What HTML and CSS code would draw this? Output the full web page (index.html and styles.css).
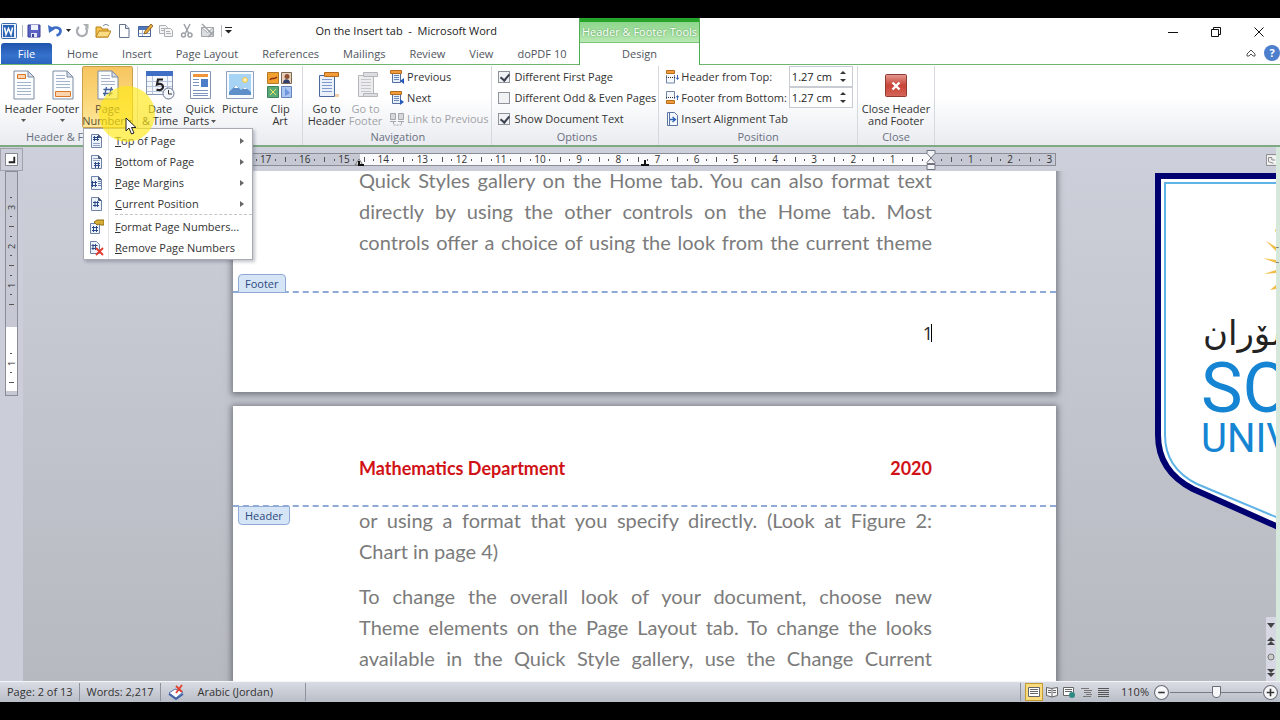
FILE: index.html
```
<!DOCTYPE html>
<html lang="en">
<head>
  <meta charset="UTF-8" />
  <meta name="viewport" content="width=device-width, initial-scale=1.0"/>
  <title>On the Insert tab - Microsoft Word</title>
  <link rel="stylesheet" href="styles.css">
</head>
<body>
  <!-- shared icon parts -->
  <svg class="defs" aria-hidden="true">
    <symbol id="sheet" viewBox="0 0 24 30">
      <path d="M2 1h14l6 6v22H2z" fill="#fbfcfe" stroke="#7d8ba3"/>
      <path d="M16 1v6h6z" fill="#d4dbe6" stroke="#7d8ba3"/>
    </symbol>
    <symbol id="num-page" viewBox="0 0 16 16">
      <path d="M3.500 1.500h7l3 3v10h-10z" fill="#eef3fb" stroke="#6f83a8"/>
      <path d="M10.500 1.500v3h3" fill="#46597c" stroke="#46597c"/>
    </symbol>
    <symbol id="caret" viewBox="0 0 7 4"><path d="M1 0h5L3.500 3z" fill="#555"/></symbol>
    <symbol id="nav-page" viewBox="0 0 16 16">
      <path d="M3.500 3.500h8v10h-8z" fill="#e6eefa" stroke="#566f9e"/>
      <path d="M5 6.500h5M5 8.500h5M5 10.500h5" stroke="#6b87b8"/>
      <path d="M1.500 1.500h11v3h-11z" fill="#f09b3c" stroke="#b56a1c"/>
    </symbol>
  </svg>

  <div class="window">
    <header class="top">
      <div class="top-left">
        <div class="titlebar">
          <div class="qat">
            <svg class="ico" viewBox="0 0 16 16"><rect x=".5" y=".5" width="15" height="15" rx="1" fill="#e8f0fb" stroke="#3a68ad"/><rect x="2" y="2" width="11" height="12" fill="#2b62b4"/><path d="M3.500 4.500l1.500 7 2.500-6 2.500 6 1.500-7" fill="none" stroke="#fff" stroke-width="1.500"/></svg>
            <span class="vsep"></span>
            <button type="button" aria-label="Save"><svg class="ico" viewBox="0 0 16 16"><path d="M2 2h12v12H2z" fill="#5a63c4" stroke="#3a3f94"/><path d="M5 2h7v5H5z" fill="#eef1fb"/><path d="M5 10h6v4H5z" fill="#dfe3f5"/><path d="M6 11h2v3H6z" fill="#3a3f94"/></svg></button>
            <button type="button" aria-label="Undo"><svg class="ico" viewBox="0 0 16 16"><path d="M5 5.500c5-2.500 9 0 8.500 3-.3 2-2 3.500-4 4" fill="none" stroke="#3d6cc5" stroke-width="2.600"/><path d="M1 2l1 8 6-4z" fill="#3d6cc5"/></svg></button>
            <button type="button" class="more" aria-label="Undo list"><svg class="caret" viewBox="0 0 7 4"><path d="M1 0h5L3.500 3z" fill="#222"/></svg></button>
            <button type="button" aria-label="Repeat"><svg class="ico" viewBox="0 0 16 16"><path d="M5 4a5 5 0 1 0 6.500.5" fill="none" stroke="#aaadb2" stroke-width="2.200"/><path d="M9 1h5.500v5.500z" fill="#aaadb2"/></svg></button>
            <button type="button" aria-label="Open"><svg class="ico" viewBox="0 0 16 16"><path d="M1 4h5l1 2h6v8H1z" fill="#f3c14d" stroke="#b98418"/><path d="M4 8h12l-3 6H1z" fill="#fbdc84" stroke="#b98418"/><path d="M8 3c2-2 4-2 6 0" fill="none" stroke="#6b7688"/></svg></button>
            <button type="button" aria-label="New"><svg class="ico" viewBox="0 0 16 16"><path d="M3.500 1.500h6l3.500 4v9H3.500z" fill="#fff" stroke="#64748f"/><path d="M9.500 1.500v4H13" fill="#dbe2ee" stroke="#64748f"/></svg></button>
            <button type="button" aria-label="Edit"><svg class="ico" viewBox="0 0 16 16"><path d="M1.500 3.500h12v10h-12z" fill="#fff" stroke="#466496"/><path d="M2 4h11v3H2z" fill="#4f77bd"/><path d="M2 10.500h11M5.500 7v6" stroke="#9fb2d3"/><path d="M7 11l1-3 6-7 2 2-6 7z" fill="#e6a83e" stroke="#7c5a1e" stroke-width=".8"/></svg></button>
            <button type="button" aria-label="Copy"><svg class="ico" viewBox="0 0 16 16" fill="#f4f4f5" stroke="#adb0b5"><path d="M1.500 2.500h6l2 2v6h-8z"/><path d="M6.500 5.500h6l2 2v6h-8zM3 5.500h3M3 7.500h3M8 8.500h4M8 10.500h5"/></svg></button>
            <button type="button" aria-label="Cut"><svg class="ico" viewBox="0 0 16 16" fill="none" stroke="#9da0a6" stroke-width="1.500"><path d="M5 1l4.500 9M11 1L6.500 10"/><circle cx="4.500" cy="12" r="2"/><circle cx="11" cy="12" r="2"/></svg></button>
            <button type="button" aria-label="Delete"><svg class="ico" viewBox="0 0 16 16" fill="#dcdde0" stroke="#a2a5aa"><path d="M1.500 4.500h12v9h-12zM1.500 4.500l6 5 6-5"/><path d="M2 1l11 11M14 8L8 14" stroke-width="1.500"/></svg></button>
            <span class="vsep"></span>
            <button type="button" class="customize" aria-label="Customize Quick Access Toolbar"><svg class="customize-ico" viewBox="0 0 7 7"><path d="M0 .5h7" stroke="#222"/><path d="M0 3h7L3.500 6.500z" fill="#222"/></svg></button>
          </div>
          <h1 class="title">On the Insert tab&nbsp; -&nbsp; Microsoft Word</h1>
        </div>
        <nav class="tabs">
          <button type="button" class="tab file">File</button>
          <button type="button" class="tab">Home</button>
          <button type="button" class="tab">Insert</button>
          <button type="button" class="tab">Page Layout</button>
          <button type="button" class="tab">References</button>
          <button type="button" class="tab">Mailings</button>
          <button type="button" class="tab">Review</button>
          <button type="button" class="tab">View</button>
          <button type="button" class="tab">doPDF 10</button>
        </nav>
      </div>
      <div class="context">
        <div class="context-name">Header &amp; Footer Tools</div>
        <button type="button" class="tab design">Design</button>
      </div>
      <div class="top-right">
        <div class="window-buttons">
          <button type="button" aria-label="Minimize"><svg viewBox="0 0 10 10"><path d="M0 5.500h10" stroke="#111"/></svg></button>
          <button type="button" aria-label="Restore"><svg viewBox="0 0 10 10" fill="none" stroke="#111"><path d="M.5 2.500h7v7h-7zM2.500 2.500v-2h7v7h-2"/></svg></button>
          <button type="button" aria-label="Close"><svg viewBox="0 0 10 10"><path d="M.5.5l9 9M9.500.5l-9 9" stroke="#111"/></svg></button>
        </div>
        <div class="help-row">
          <button type="button" aria-label="Minimize the Ribbon"><svg class="small-ico" viewBox="0 0 10 8"><path d="M1 5l4-4 4 4v2H7L5 5 3 7H1z" fill="#fff" stroke="#555"/></svg></button>
          <button type="button" class="help" aria-label="Help">?</button>
        </div>
      </div>
    </header>

    <section class="ribbon">
      <div class="group">
        <div class="group-body">
          <button type="button" class="big">
            <svg class="big-ico" viewBox="0 0 24 30"><use href="#sheet"/><path d="M5.500 4.500h8v4h-8z" fill="#fbd3ad" stroke="#d9772b"/><path d="M5 12.500h14M5 15.500h14M5 18.500h14M5 21.500h14M5 24.500h14" stroke="#a3b3cc"/></svg>
            <span>Header</span><svg class="caret"><use href="#caret"/></svg>
          </button>
          <button type="button" class="big">
            <svg class="big-ico" viewBox="0 0 24 30"><use href="#sheet"/><path d="M5 5.500h9M5 8.500h9M5 11.500h14M5 14.500h14M5 17.500h14" stroke="#a3b3cc"/><path d="M4.500 21.500h15v5h-15z" fill="#fbd3ad" stroke="#d9772b"/></svg>
            <span>Footer</span><svg class="caret"><use href="#caret"/></svg>
          </button>
          <div class="dropdown">
            <button type="button" class="big active">
              <svg class="big-ico" viewBox="0 0 24 30"><use href="#sheet"/><path d="M5 5.500h9M5 8.500h9M5 11.500h14M5 14.500h14" stroke="#a9b4c6"/><path d="M10.500 17l-2 9M15.500 17l-2 9M7.500 19.500h9.500M7 23.500h9.500" stroke="#415f9a" stroke-width="1.300"/></svg>
              <span>Page<br>Number<svg class="caret"><use href="#caret"/></svg></span>
            </button>
            <div class="menu" role="menu">
              <button type="button" class="menu-item" role="menuitem">
                <svg class="ico" viewBox="0 0 16 16"><use href="#num-page"/><path d="M6.500 3v5M9.500 3v5M5 4.500h6M5 6.500h6" stroke="#2c4a87"/><path d="M5 10.500h7M5 12.500h7" stroke="#8fa3c6"/></svg>
                <span><u>T</u>op of Page</span><i class="sub"></i>
              </button>
              <button type="button" class="menu-item" role="menuitem">
                <svg class="ico" viewBox="0 0 16 16"><use href="#num-page"/><path d="M7.500 8v6M10.500 8v6M6 9.500h6M6 11.500h6" stroke="#2c4a87"/><path d="M5 4.500h5M5 6.500h7" stroke="#8fa3c6"/></svg>
                <span><u>B</u>ottom of Page</span><i class="sub"></i>
              </button>
              <button type="button" class="menu-item" role="menuitem">
                <svg class="ico" viewBox="0 0 16 16"><use href="#num-page"/><path d="M4.500 6v6M7.500 6v6M3 7.500h6M3 10.500h6" stroke="#2c4a87"/><path d="M10 6.500h3M10 8.500h3M10 10.500h3" stroke="#6a82b0"/></svg>
                <span><u>P</u>age Margins</span><i class="sub"></i>
              </button>
              <button type="button" class="menu-item" role="menuitem">
                <svg class="ico" viewBox="0 0 16 16"><use href="#num-page"/><path d="M7 5v6M9.500 5v6M5 6.500h6M5 9.500h6" stroke="#2c4a87"/></svg>
                <span><u>C</u>urrent Position</span><i class="sub"></i>
              </button>
              <hr>
              <button type="button" class="menu-item" role="menuitem">
                <svg class="ico" viewBox="0 0 16 16"><path d="M2.500 4.500h9v10h-9z" fill="#eef3fb" stroke="#6f83a8"/><path d="M5.500 7v6M8.500 7v6M4 8.500h6M4 11.500h6" stroke="#2c4a87"/><path d="M6 3l3-2h7v5h-3l-2-1-2 1z" fill="#d6ad35" stroke="#8f6f17"/></svg>
                <span><u>F</u>ormat Page Numbers...</span>
              </button>
              <button type="button" class="menu-item" role="menuitem">
                <svg class="ico" viewBox="0 0 16 16"><path d="M2.500 1.500h6l3 3v9h-9z" fill="#eef3fb" stroke="#6f83a8"/><path d="M5 4v6M7.500 4v6M3.500 5.500h6M3.500 8.500h6" stroke="#2c4a87"/><path d="M8 8l7 7M15 8l-7 7" stroke="#e23b2e" stroke-width="1.800"/></svg>
                <span><u>R</u>emove Page Numbers</span>
              </button>
            </div>
            <div class="click-spot"></div>
            <svg class="pointer" viewBox="0 0 12 18"><path d="M1 1v13l3-3 2.500 6 2.500-1-2.500-5.500H11z" fill="#fff" stroke="#222"/></svg>
          </div>
        </div>
        <div class="group-label">Header &amp; Footer</div>
      </div>

      <div class="group">
        <div class="group-body insert">
          <button type="button" class="big">
            <svg class="big-ico wide" viewBox="0 0 30 30"><path d="M1.500 1.500h26v23h-26z" fill="#f4f7fc" stroke="#8796b3"/><path d="M1 1h27v5H1z" fill="#3f6fc4"/><path d="M2 11.500h25M2 16.500h25M2 21.500h25M7.500 6v18M22.500 6v18" stroke="#b9c5da"/><path d="M18 9.500h-5l-1 5c4-1.500 6 0 6 2.500s-3 4-6.500 2.500" fill="none" stroke="#222" stroke-width="2.200"/><circle cx="23.500" cy="23.500" r="5.500" fill="#f3f6fb" stroke="#66728a"/><path d="M23.500 20v4h3.500" fill="none" stroke="#333"/></svg>
            <span>Date<br>&amp; Time</span>
          </button>
          <button type="button" class="big">
            <svg class="big-ico" viewBox="0 0 24 30"><path d="M2.500 1.500h20v27h-20z" fill="#fff" stroke="#8796b3"/><path d="M5 4h15v3H5z" fill="#f0953a"/><path d="M5 9.500h6M5 12.500h6M5 15.500h6M5 20.500h15M5 23.500h15M5 25.500h15" stroke="#7c93bd"/><path d="M13 9h7v8h-7z" fill="#4d7cc9"/></svg>
            <span>Quick<br>Parts<svg class="caret"><use href="#caret"/></svg></span>
          </button>
          <button type="button" class="big">
            <svg class="big-ico wide" viewBox="0 0 30 30"><path d="M1.500 1.500h27v27h-27z" fill="#f7fafd" stroke="#8fa2c0"/><path d="M4 4h22v20H4z" fill="#a7d4f5"/><path d="M4 22l7-7 5 5 4-3 6 5v3H4z" fill="#5f8fc9"/><path d="M11 15l2.500 3H9zM20 17l2 2h-4z" fill="#fff"/><circle cx="20" cy="10" r="2.500" fill="#fff2b0" stroke="#f2c04c"/></svg>
            <span>Picture</span>
          </button>
          <button type="button" class="big">
            <svg class="big-ico wide" viewBox="0 0 30 30"><path d="M2.500 2.500h11v11h-11z" fill="#f3a12e" stroke="#b27a28"/><path d="M5 10c2-4 3 1 7-3" fill="none" stroke="#8a2f13" stroke-width="1.500"/><path d="M16.500 2.500h10v11h-10z" fill="#e9d3bb" stroke="#7d6756"/><circle cx="22" cy="6.500" r="2.500" fill="#8d5332"/><path d="M18 13c0-5 7-5 7 0z" fill="#333f6b"/><path d="M2.500 16.500h11v11h-11z" fill="#5aa978" stroke="#3e8059"/><path d="M5 19l6 6M11 19l-6 6" stroke="#f5e565"/><path d="M16.500 16.500h10v11h-10z" fill="#aac6f1" stroke="#6484bb"/><path d="M20 18l5 5-5 3z" fill="#6f95dc"/></svg>
            <span>Clip<br>Art</span>
          </button>
        </div>
        <div class="group-label">Insert</div>
      </div>

      <div class="group navigation">
        <div class="group-body">
          <button type="button" class="big">
            <svg class="big-ico" viewBox="0 0 24 30"><path d="M4.500 5.500h15v21h-15z" fill="#eaf1fb" stroke="#4d689c"/><path d="M7 9.500h10M7 12.500h10M7 15.500h10M7 18.500h10M7 21.500h10" stroke="#7f9acb"/><path d="M9.500 2.500h14v4h-14z" fill="#f39c3b" stroke="#b56a1c"/><path d="M20 24h4v3h-4z" fill="#f3cfa8"/></svg>
            <span>Go to<br>Header</span>
          </button>
          <button type="button" class="big" disabled>
            <svg class="big-ico" viewBox="0 0 24 30"><path d="M4.500 5.500h15v21h-15z" fill="#ededef" stroke="#b4b6ba"/><path d="M7 9.500h10M7 12.500h10M7 15.500h10M7 18.500h10M7 21.500h10" stroke="#c4c6ca"/><path d="M9.500 2.500h14v4h-14zM9.500 23.500h14v3h-14z" fill="#dcdde0" stroke="#b4b6ba"/></svg>
            <span>Go to<br>Footer</span>
          </button>
          <div class="rows">
            <button type="button" class="row"><svg class="ico" viewBox="0 0 16 16"><use href="#nav-page"/><path d="M15 9v6l-4-3z" fill="#2559bd"/></svg>Previous</button>
            <button type="button" class="row"><svg class="ico" viewBox="0 0 16 16"><use href="#nav-page"/><path d="M11 9v6l4-3z" fill="#2559bd"/></svg>Next</button>
            <button type="button" class="row" disabled><svg class="ico" viewBox="0 0 16 16" fill="#d7d8db" stroke="#a4a6ab"><path d="M1.500 2.500h5v6h-5zM9.500 2.500h5v6h-5zM1 10.500h6M9 10.500h6"/><path d="M4.500 11v3h8v-3" fill="none" stroke-dasharray="2 1"/></svg>Link to Previous</button>
          </div>
        </div>
        <div class="group-label">Navigation</div>
      </div>

      <div class="group options">
        <div class="group-body">
          <div class="rows">
            <label class="row"><input type="checkbox" checked>Different First Page</label>
            <label class="row"><input type="checkbox">Different Odd &amp; Even Pages</label>
            <label class="row"><input type="checkbox" checked>Show Document Text</label>
          </div>
        </div>
        <div class="group-label">Options</div>
      </div>

      <div class="group position">
        <div class="group-body">
          <div class="rows">
            <div class="row">
              <svg class="ico" viewBox="0 0 16 16"><path d="M3.500 1.500h8v3h-8z" fill="#f39c3b" stroke="#b56a1c"/><path d="M3.500 6v8h8V6" fill="#f4f7fc" stroke="#7386a8"/><path d="M3 8.500h9" stroke="#333" stroke-dasharray="1 1"/><path d="M14.500 6v4M13 8.500l1.500 2 1.500-2" fill="none" stroke="#3567bd"/></svg>
              <label for="from-top">Header from Top:</label>
              <div class="spin"><input id="from-top" type="text" value="1.27 cm"><span class="arrows"><button type="button" aria-label="Increase"></button><button type="button" class="down" aria-label="Decrease"></button></span></div>
            </div>
            <div class="row">
              <svg class="ico" viewBox="0 0 16 16"><path d="M3.500 9V1.500h8V9" fill="#f4f7fc" stroke="#7386a8"/><path d="M3 7.500h9" stroke="#333" stroke-dasharray="1 1"/><path d="M3.500 10.500h8v3h-8z" fill="#f39c3b" stroke="#b56a1c"/><path d="M14.500 6v4M13 7.500l1.500-2 1.500 2" fill="none" stroke="#3567bd"/></svg>
              <label for="from-bottom">Footer from Bottom:</label>
              <div class="spin"><input id="from-bottom" type="text" value="1.27 cm"><span class="arrows"><button type="button" aria-label="Increase"></button><button type="button" class="down" aria-label="Decrease"></button></span></div>
            </div>
            <button type="button" class="row"><svg class="ico" viewBox="0 0 16 16"><path d="M4.500 1.500h7l3 3v10h-10z" fill="#f4f7fc" stroke="#5c75a5"/><path d="M6.500 2v12" stroke="#5c75a5"/><path d="M7 8.500h5M9.500 6l3 2.500-3 2.500" fill="none" stroke="#2b62b4" stroke-width="1.300"/></svg>Insert Alignment Tab</button>
          </div>
        </div>
        <div class="group-label">Position</div>
      </div>

      <div class="group">
        <div class="group-body">
          <button type="button" class="big">
            <svg class="big-ico wide" viewBox="0 0 30 30"><defs><linearGradient id="red" x2="0" y2="1"><stop offset="0" stop-color="#e39a92"/><stop offset=".5" stop-color="#c94336"/><stop offset="1" stop-color="#d4675a"/></linearGradient></defs><rect x="4.500" y="4.500" width="21" height="22" rx="1" fill="url(#red)" stroke="#8f3a33"/><path d="M11.500 12.500l7 7M18.500 12.500l-7 7" stroke="#fff" stroke-width="2.400"/></svg>
            <span>Close Header<br>and Footer</span>
          </button>
        </div>
        <div class="group-label">Close</div>
      </div>
    </section>

    <main class="workspace">
      <aside class="side">
        <button type="button" class="tab-stop" aria-label="Tab stop"><svg viewBox="0 0 14 14"><path d="M.5.5h13v13H.5z" fill="#fff" stroke="#777b86"/><path d="M10 4v6H4" fill="none" stroke="#222" stroke-width="2"/></svg></button>
        <div class="vruler"><span></span><span>3</span><span>2</span><span>1</span><span></span><span>1</span></div>
      </aside>

      <div class="doc-area">
        <div class="ruler-row">
          <div class="ruler">
            <div class="ruler-cells">
              <span>17</span><span>16</span><span>15</span><span>14</span><span>13</span><span>12</span><span>11</span><span>10</span><span>9</span><span>8</span><span>7</span><span>6</span><span>5</span><span>4</span><span>3</span><span>2</span><span>1</span><span></span><span>1</span><span>2</span><span>3</span>
            </div>
            <svg class="indent-left" viewBox="0 0 10 8"><path d="M1 7l4-6 4 6z" fill="#ddd" stroke="#777"/><path d="M5 3v4h5" fill="none" stroke="#111" stroke-width="2"/></svg>
            <svg class="tab-mark" viewBox="0 0 8 8"><path d="M0 7h8M4 2v5" stroke="#111" stroke-width="2"/></svg>
            <svg class="indent-right" viewBox="0 0 10 20"><path d="M1 .5h8v3L5 8 1 3.500zM1 13.500v-1L5 8l4 4.500v1zM1 14.500h8v5H1z" fill="#f2f3f6" stroke="#70747e"/></svg>
          </div>
        </div>

        <div class="canvas">
          <article class="page first">
            <div class="page-text">
              <p>Quick Styles gallery on the Home tab. You can also format text</p>
              <p>directly by using the other controls on the Home tab. Most</p>
              <p>controls offer a choice of using the look from the current theme</p>
            </div>
            <footer class="page-footer">
              <span class="zone-tag">Footer</span>
              <span class="page-num">1</span>
            </footer>
          </article>

          <article class="page">
            <header class="page-header">
              <span class="zone-tag">Header</span>
              <b>Mathematics Department</b>
              <b>2020</b>
            </header>
            <div class="page-text">
              <p>or using a format that you specify directly. (Look at Figure 2:</p>
              <p class="last">Chart in page 4)</p>
              <p>To change the overall look of your document, choose new</p>
              <p>Theme elements on the Page Layout tab. To change the looks</p>
              <p>available in the Quick Style gallery, use the Change Current</p>
            </div>
          </article>
        </div>

        <!-- university crest, partly outside the view -->
        <svg class="crest" viewBox="0 0 121 360">
          <path d="M3 3h240v280L121 353 38 316Q3 298 3 262z" fill="#fff" stroke="#000070" stroke-width="6"/>
          <path d="M10 10h240v270L121 344 42 311Q10 295 10 262z" fill="none" stroke="#5fb3e6" stroke-width="2"/>
          <g fill="#f3bd45"><path d="M121 60l-1-3 1-1zM121 74l-10-6 10 10zM121 87l-13-2 13 5zM121 97l-12 4 12-1zM121 112l-6 5 6-1z"/></g>
          <text class="crest-ar" x="48" y="172">سۆران</text>
          <text class="crest-big" x="46" y="239">SORAN</text>
          <text class="crest-small" x="46" y="279">UNIVERSITY</text>
        </svg>
      </div>

      <aside class="scroll">
        <button type="button" aria-label="Ruler" class="ruler-toggle"><svg viewBox="0 0 12 14"><path d="M.5.5h13v13H.5z" fill="#f3f3f6" stroke="#777"/><path d="M3 4h4v3h4M3 4v5l6 2" fill="none" stroke="#777"/></svg></button>
        <div class="scroll-thumb"></div>
        <div class="scroll-nav">
          <button type="button" aria-label="Scroll down"><svg viewBox="0 0 10 8"><path d="M1 2h8L5 7z" fill="#444"/></svg></button>
          <button type="button" aria-label="Previous page"><svg viewBox="0 0 10 8"><path d="M1 4l4-4 4 4zM1 8l4-4 4 4z" fill="#444"/></svg></button>
          <button type="button" aria-label="Select browse object"><svg viewBox="0 0 10 8"><circle cx="5" cy="4" r="3" fill="#ccc" stroke="#777"/></svg></button>
          <button type="button" aria-label="Next page"><svg viewBox="0 0 10 8"><path d="M1 0h8L5 4zM1 4h8L5 8z" fill="#444"/></svg></button>
        </div>
      </aside>
    </main>

    <footer class="status">
      <span class="cell">Page: 2 of 13</span>
      <span class="cell">Words: 2,217</span>
      <span class="cell lang"><svg class="ico" viewBox="0 0 16 16"><path d="M1 9l6-4 8 3-7 6z" fill="#fff" stroke="#5673ae"/><path d="M1 10l7 5 7-5" fill="none" stroke="#4466ab" stroke-width="2"/><path d="M8 2l6 6M14 1L8 9" stroke="#e2402f" stroke-width="1.800"/></svg>Arabic (Jordan)</span>
      <div class="views">
        <button type="button" class="on" aria-label="Print Layout"><svg viewBox="0 0 12 12"><path d="M.5 1.500h11v9H.5z" fill="#fff" stroke="#666"/><path d="M2 3.500h8M2 5.500h8M2 7.500h8" stroke="#666"/></svg></button>
        <button type="button" aria-label="Full Screen Reading"><svg viewBox="0 0 12 12"><path d="M.5 1.500l5 1 6-1v8l-5.500 1.500-5.500-1.500z" fill="#f5f5f7" stroke="#666"/><path d="M6 2v9M2 4.500h3M2 6.500h3M7 4.500h3M7 6.500h3" stroke="#666"/></svg></button>
        <button type="button" aria-label="Web Layout"><svg viewBox="0 0 12 12"><path d="M.5 1.500h10v8H.5z" fill="#fff" stroke="#666"/><path d="M2 3.500h7M2 5.500h7" stroke="#666"/><circle cx="9" cy="9" r="3" fill="#2f8a83"/></svg></button>
        <button type="button" aria-label="Outline"><svg viewBox="0 0 12 12"><path d="M1 2.500h8M4 4.500h8M4 6.500h7M6 8.500h6M3 10.500h8" stroke="#777"/></svg></button>
        <button type="button" aria-label="Draft"><svg viewBox="0 0 12 12"><path d="M1 2.500h11M1 4.500h11M1 6.500h11M1 8.500h11M1 10.500h11" stroke="#555"/></svg></button>
      </div>
      <div class="zoom">
        <label for="zoom">110%</label>
        <button type="button" class="round" aria-label="Zoom Out"><svg viewBox="0 0 14 14"><circle cx="7" cy="7" r="6.500" fill="#f7f7f9" stroke="#6a6e77"/><path d="M4 7h6" stroke="#333" stroke-width="1.500"/></svg></button>
        <input id="zoom" type="range" min="0" max="100" value="51">
        <button type="button" class="round" aria-label="Zoom In"><svg viewBox="0 0 14 14"><circle cx="7" cy="7" r="6.500" fill="#f7f7f9" stroke="#6a6e77"/><path d="M3.500 7h7M7 3.500v7" stroke="#333" stroke-width="1.500"/></svg></button>
      </div>
    </footer>
  </div>
</body>
</html>
```
FILE: styles.css
```
* {
  box-sizing: border-box;
}
body {
  margin: 0;
  padding: 18px 0;
  height: 100vh;
  background: #000;
  color: #333;
  font-family: "Open Sans", "Noto Sans", sans-serif;
  font-size: 11px;
  line-height: 12px;
  overflow: hidden;
}
button {
  padding: 0;
  border: none;
  background: none;
  color: inherit;
  font: inherit;
}
button:disabled {
  color: #a0a2a7;
}
svg {
  display: block;
}
.defs {
  position: absolute;
  width: 0;
  height: 0;
}
.ico {
  width: 16px;
  height: 16px;
  flex: none;
}
.caret {
  width: 7px;
  height: 4px;
}
.window {
  display: flex;
  flex-direction: column;
  height: 100%;
  background: #fff;
}

/* title bar and tabs */
.top {
  display: flex;
  height: 47px;
}
.top-left {
  width: 579px;
  border-bottom: 1px solid #6fb56f;
}
.titlebar {
  display: flex;
  align-items: center;
  height: 25px;
}
.qat {
  display: flex;
  align-items: center;
  gap: 5px;
  flex: 1;
  padding-left: 1px;
}
.qat .more {
  margin: 0 -3px;
}
.vsep {
  width: 1px;
  height: 12px;
  margin-right: -2px;
  background: #b5b8be;
}
.customize-ico {
  width: 7px;
  height: 7px;
}
.title {
  margin: 0;
  padding-right: 82px;
  color: #222;
  font-size: 11px;
  font-weight: normal;
}
.tabs {
  display: flex;
  height: 21px;
}
.tab {
  padding: 0 12px;
  color: #50545c;
  white-space: nowrap;
}
.file {
  width: 51px;
  margin: 0 3px 0 1px;
  border-radius: 3px 3px 0 0;
  background: linear-gradient(#1f54ac, #3672cc 60%, #2a63bf);
  color: #fff;
}
.context {
  display: flex;
  flex-direction: column;
  width: 121px;
  border: solid #4fae4f;
  border-width: 0 1px;
}
.context-name {
  height: 25px;
  border-top: 4px solid #27a52b;
  border-bottom: 1px solid #7cc67c;
  background: linear-gradient(#8ed68c, #b7e8b2);
  color: #fff;
  line-height: 20px;
  text-align: center;
  text-shadow: 0 0 2px #4b8f4b;
  white-space: nowrap;
}
.design {
  flex: 1;
}
.top-right {
  flex: 1;
  border-bottom: 1px solid #6fb56f;
}
.window-buttons {
  display: flex;
  justify-content: flex-end;
  gap: 33px;
  height: 25px;
  padding: 2px 16px 0 0;
}
.window-buttons svg {
  width: 10px;
  height: 10px;
}
.help-row {
  display: flex;
  justify-content: flex-end;
  align-items: center;
  gap: 8px;
  height: 20px;
}
.small-ico {
  width: 10px;
  height: 8px;
}
.help {
  width: 16px;
  height: 16px;
  border-radius: 8px;
  background: #4d7fcd;
  color: #fff;
  font-weight: bold;
}

/* ribbon */
.ribbon {
  display: flex;
  height: 82px;
  padding-top: 1px;
  border-bottom: 2px solid #7fa983;
  background: linear-gradient(#fff 40%, #e9ebf0);
}
.group {
  display: flex;
  flex-direction: column;
  padding: 0 4px;
  border-right: 1px solid #d5d8dd;
}
.group-body {
  display: flex;
  height: 63px;
}
.group-label {
  color: #6a7080;
  line-height: 16px;
  text-align: center;
  white-space: nowrap;
}
.big {
  display: flex;
  flex-direction: column;
  align-items: center;
  min-width: 39px;
  height: 62px;
  padding-top: 4px;
  white-space: nowrap;
}
.big span {
  padding-top: 3px;
}
.big span .caret {
  display: inline-block;
  margin-left: 1px;
  vertical-align: middle;
}
.big > .caret {
  margin-top: 4px;
}
.big-ico {
  width: 24px;
  height: 30px;
}
.big-ico.wide {
  width: 30px;
}
.insert {
  gap: 4px;
}
.insert .big {
  min-width: 36px;
}
.dropdown {
  position: relative;
}
.active {
  width: 51px;
  padding-top: 3px;
  border: 1px solid #c9a04c;
  border-radius: 2px;
  background: linear-gradient(#f6c560, #fbd678 50%, #ffe79a);
  color: #5d5238;
}
.rows {
  display: flex;
  flex-direction: column;
}
.row {
  display: flex;
  align-items: center;
  gap: 2px;
  height: 21px;
  white-space: nowrap;
}
.navigation {
  padding-right: 2px;
}
.navigation .rows {
  padding-left: 4px;
}
.options {
  padding: 0 2px 0 6px;
}
.options .row {
  gap: 5px;
}
.options input {
  appearance: none;
  width: 12px;
  height: 12px;
  margin: 0;
  border: 1px solid #8f949c;
  background: #f1f2f4;
}
.options input:checked::after {
  content: "";
  display: block;
  width: 4px;
  height: 7px;
  margin: 0 0 0 3px;
  border: solid #3c4250;
  border-width: 0 2px 2px 0;
  transform: rotate(40deg);
}
.spin {
  display: flex;
  width: 64px;
  height: 21px;
  margin-left: auto;
  border: 1px solid #c9ccd2;
  background: #fff;
}
.spin input {
  width: 50px;
  padding: 0 0 0 2px;
  border: none;
  background: none;
  color: #222;
  font: inherit;
}
.arrows {
  display: flex;
  flex-direction: column;
  justify-content: center;
  gap: 5px;
}
.arrows button {
  border: 3px solid transparent;
  border-top: none;
  border-bottom-color: #333;
}
.arrows .down {
  border-top: 3px solid #333;
  border-bottom: none;
}

/* page number menu */
.menu {
  position: absolute;
  top: 62px;
  left: 1px;
  z-index: 2;
  width: 170px;
  padding: 1px 0;
  border: 1px solid #a8abb3;
  background: linear-gradient(to right, #fff 24px, #e2e4e8 24px, #e2e4e8 25px, #fff 25px);
  box-shadow: 2px 2px 3px rgba(60, 60, 90, 0.3);
}
.menu-item {
  display: flex;
  align-items: center;
  gap: 11px;
  width: 100%;
  height: 21px;
  padding: 0 8px 0 4px;
  white-space: nowrap;
}
.menu hr {
  height: 1px;
  margin: 0 0 1px 31px;
  border: none;
  border-top: 1px dashed #c3c5ca;
}
.sub {
  margin-left: auto;
  border: 3px solid transparent;
  border-left: 4px solid #666;
  border-right: none;
}
.click-spot {
  position: absolute;
  top: 20px;
  left: 17px;
  z-index: 3;
  width: 56px;
  height: 56px;
  border-radius: 50%;
  background: rgba(255, 232, 20, 0.65);
}
.pointer {
  position: absolute;
  top: 51px;
  left: 43px;
  z-index: 4;
  width: 12px;
  height: 18px;
}

/* document area */
.workspace {
  display: flex;
  flex: 1;
  min-height: 0;
  background: linear-gradient(#cdd0da, #b6b9bf);
}
.side {
  width: 23px;
  background: #cbced9;
}
.tab-stop {
  display: block;
  width: 23px;
  height: 23px;
  margin-top: 1px;
  padding: 4px;
  border: 1px solid #a0a3ac;
}
.tab-stop svg {
  width: 13px;
  height: 13px;
}
.vruler {
  width: 13px;
  height: 225px;
  margin-left: 5px;
  border: 1px solid #8a8d96;
  background: linear-gradient(#c6c9d3 155px, #fff 155px, #fff 219px, #c6c9d3 219px);
}
.vruler span {
  display: block;
  height: 39px;
  background:
    linear-gradient(#555, #555) 50% 25% / 2px 1px no-repeat,
    linear-gradient(#555, #555) 50% 75% / 2px 1px no-repeat,
    linear-gradient(#555, #555) 50% 0 / 5px 1px no-repeat;
  font-size: 9px;
  line-height: 11px;
  text-align: center;
  writing-mode: vertical-rl;
  transform: rotate(180deg);
}
.vruler span:first-child {
  height: 16px;
}
.doc-area {
  position: relative;
  display: flex;
  flex-direction: column;
  flex: 1;
  min-width: 0;
  margin-right: -10px;
  overflow: hidden;
}
.ruler-row,
.canvas {
  padding-right: 10px;
}
.ruler-row {
  padding-top: 6px;
  height: 24px;
}
.ruler {
  position: relative;
  width: 823px;
  height: 13px;
  margin: 0 auto;
  border: 1px solid #8a8d96;
  background: linear-gradient(to right, #c6c9d3 126px, #fafafc 126px, #fafafc 698px, #c6c9d3 698px);
}
.ruler-cells {
  display: flex;
  height: 11px;
  margin-right: -14px;
  padding-left: 12px;
}
.ruler-cells span {
  flex: 1;
  background:
    linear-gradient(#555, #555) 25% 50% / 1px 2px no-repeat,
    linear-gradient(#555, #555) 75% 50% / 1px 2px no-repeat,
    linear-gradient(#555, #555) 0 50% / 1px 5px no-repeat;
  font-size: 10px;
  line-height: 11px;
  text-align: center;
}
.ruler-cells span:last-child {
  background:
    linear-gradient(#555, #555) 25% 50% / 1px 2px no-repeat,
    linear-gradient(#555, #555) 0 50% / 1px 5px no-repeat;
}
.indent-left {
  position: absolute;
  top: 4px;
  left: 120px;
  width: 10px;
  height: 8px;
}
.tab-mark {
  position: absolute;
  top: 4px;
  left: 407px;
  width: 8px;
  height: 8px;
}
.indent-right {
  position: absolute;
  top: -4px;
  left: 692px;
  width: 10px;
  height: 20px;
}
.canvas {
  flex: 1;
  min-height: 0;
  overflow: hidden;
}
.page {
  width: 823px;
  margin: 0 auto 14px;
  padding-bottom: 20px;
  background: #fff;
  box-shadow: 0 1px 6px 2px rgba(70, 73, 82, 0.6);
}
.page.first {
  margin-top: -6px;
  padding-bottom: 0;
}
.page-text {
  padding: 0 124px 0 126px;
  color: #7b7b7b;
  font-family: Lato, "Open Sans", sans-serif;
  font-size: 20px;
  line-height: 31px;
}
.page-text p {
  margin: 0;
  white-space: nowrap;
  text-align: justify;
  text-align-last: justify;
}
.page-text .last {
  margin-bottom: 14px;
  text-align-last: left;
}
.page-header,
.page-footer {
  position: relative;
  display: flex;
  align-items: center;
  height: 101px;
  padding: 24px 124px 0 126px;
  font-family: Lato, "Open Sans", sans-serif;
}
.page-header {
  justify-content: space-between;
  margin-bottom: -2px;
  border-bottom: 2px dashed #8faad6;
  color: #d01217;
  font-size: 18px;
}
.page-footer {
  justify-content: flex-end;
  margin-top: 33px;
  padding-top: 0;
  padding-bottom: 20px;
  border-top: 2px dashed #8faad6;
  color: #222;
}
.page-num {
  margin-right: -3px;
  padding-right: 2px;
  background: linear-gradient(#000, #000) calc(100% - 3px) 0 / 1px 100% no-repeat;
  font: 18px "Open Sans", sans-serif;
  line-height: 18px;
}
.zone-tag {
  position: absolute;
  left: 5px;
  padding: 0 6px;
  border: 1px solid #8faad6;
  background: #d6e5f6;
  color: #2c4a80;
  font: 11px "Open Sans", sans-serif;
  line-height: 17px;
}
.page-footer .zone-tag {
  bottom: 99px;
  border-radius: 4px 4px 0 0;
}
.page-header .zone-tag {
  top: 100px;
  border-radius: 0 0 4px 4px;
}
.crest {
  position: absolute;
  top: 26px;
  right: 0;
  width: 121px;
  height: 360px;
}
.crest-ar {
  direction: rtl;
  text-anchor: end;
  fill: #222;
  font: 34px "DejaVu Sans", sans-serif;
}
.crest-big,
.crest-small {
  fill: #1585d3;
  font: 70px Roboto, sans-serif;
}
.crest-small {
  font-size: 40px;
}
.scroll {
  z-index: 1;
  display: flex;
  flex-direction: column;
  width: 14px;
  border-right: 4px solid #d6e8dc;
}
.ruler-toggle {
  margin-top: 6px;
}
.ruler-toggle svg {
  width: 10px;
  height: 14px;
}
.scroll-thumb {
  align-self: flex-end;
  width: 3px;
  height: 16px;
  margin: 80px -3px auto 0;
  border: solid #888;
  border-width: 1px 0;
}
.scroll-nav {
  display: flex;
  flex-direction: column;
  gap: 8px;
  padding: 4px 0;
  background: #d5d8e3;
}
.scroll-nav svg {
  width: 10px;
  height: 8px;
}

/* status bar */
.status {
  display: flex;
  align-items: center;
  height: 21px;
  border-top: 1px solid #f4f5f8;
  background: linear-gradient(#d9dce3, #b9bdc7);
}
.cell {
  display: flex;
  align-items: center;
  gap: 14px;
  height: 18px;
  padding: 0 6px 0 7px;
  border-right: 1px solid #8e929c;
}
.lang {
  padding-right: 32px;
}
.views {
  display: flex;
  align-items: center;
  gap: 1px;
  margin-left: auto;
  padding-left: 4px;
  border-left: 1px solid #8e929c;
}
.views button {
  padding: 2px;
}
.views svg {
  width: 12px;
  height: 12px;
}
.views .on {
  border: 1px solid #c49a34;
  background: #fbdc7c;
}
.zoom {
  display: flex;
  align-items: center;
  gap: 1px;
  padding: 0 2px 0 10px;
}
.zoom label {
  padding-right: 4px;
}
.round svg {
  width: 15px;
  height: 15px;
}
.zoom input {
  appearance: none;
  width: 92px;
  height: 14px;
  margin: 0;
  background: linear-gradient(#777b85, #777b85) 0 50% / 100% 1px no-repeat;
}
.zoom input::-webkit-slider-thumb {
  appearance: none;
  width: 9px;
  height: 12px;
  border: 1px solid #6a6e77;
  border-radius: 1px 1px 5px 5px;
  background: #f7f7f9;
}
```
